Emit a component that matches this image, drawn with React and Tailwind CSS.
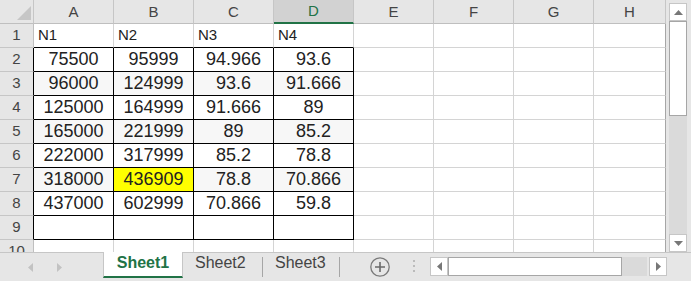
import React from 'react';

const COLS = ['A', 'B', 'C', 'D', 'E', 'F', 'G', 'H'];

const DATA = [
    ['N1', 'N2', 'N3', 'N4'],
    ['75500', '95999', '94.966', '93.6'],
    ['96000', '124999', '93.6', '91.666'],
    ['125000', '164999', '91.666', '89'],
    ['165000', '221999', '89', '85.2'],
    ['222000', '317999', '85.2', '78.8'],
    ['318000', '436909', '78.8', '70.866'],
    ['437000', '602999', '70.866', '59.8'],
    ['', '', '', ''],
    ['', '', '', ''],
];

const font = { fontFamily: '"Liberation Sans", Arial, sans-serif' };

// header cell at top of a column
const ColHeader = ({ label, index }) => {
    if (index === 3) {
        return (
            <div className="flex items-center justify-center border-r border-b-2 border-r-[#c6c6c6] border-b-[#217346] bg-[#d2d2d2] pt-[1px] text-[15px] text-[#217346]">
                {label}
            </div>
        );
    }
    return (
        <div className="flex items-center justify-center border-r border-b border-r-[#c6c6c6] border-b-[#bfbfbf] bg-[#e6e6e6] pt-[1px] text-[15px] text-[#444]">
            {label}
        </div>
    );
};

const RowHeader = ({ row }) => {
    const inTable = row >= 2 && row <= 9;
    return (
        <div
            className={`flex items-center justify-center border-r border-b border-b-[#c6c6c6] bg-[#e6e6e6] text-[15px] text-[#444] ${
                inTable ? 'border-r-black' : 'border-r-[#bfbfbf]'
            }`}
        >
            {row}
        </div>
    );
};

const Cell = ({ row, col, value }) => {
    // col: 0..7 => A..H
    const inTable = col <= 3;
    if (!inTable) {
        return (
            <div
                className={`border-r border-b border-b-[#d4d4d4] bg-white ${
                    col === 7 ? 'border-r-[#a6a6a6]' : 'border-r-[#d4d4d4]'
                }`}
            />
        );
    }
    const blackRight = row >= 2 && row <= 9;
    const blackBottom = row >= 1 && row <= 9;
    let bg = 'bg-white';
    if (row === 7 && col === 1) bg = 'bg-[#ffff00]';
    else if (row === 3 || row === 5 || row === 7) bg = 'bg-[#f7f7f7]';

    const text =
        row === 1
            ? 'justify-start pl-[4px] text-[15px]'
            : 'justify-center text-[18px]';

    return (
        <div
            className={`flex items-center border-r border-b text-[#222] ${bg} ${text} ${
                blackRight ? 'border-r-black' : 'border-r-[#d4d4d4]'
            } ${blackBottom ? 'border-b-black' : 'border-b-[#d4d4d4]'}`}
        >
            {value}
        </div>
    );
};

const Grid = () => (
    <div className="grid h-[252px] w-[666px] shrink-0 grid-cols-[34px_repeat(7,80px)_72px] auto-rows-[24px] overflow-hidden">
        <div className="relative border-r border-b border-r-[#c6c6c6] border-b-[#bfbfbf] bg-[#e6e6e6]">
            <svg className="absolute left-0 top-0" width="33" height="23">
                <polygon points="17,20 31,20 31,6" fill="#c6c6c6" />
            </svg>
        </div>
        {COLS.map((c, i) => (
            <ColHeader key={c} label={c} index={i} />
        ))}
        {DATA.map((r, ri) => (
            <React.Fragment key={ri}>
                <RowHeader row={ri + 1} />
                {COLS.map((c, ci) => (
                    <Cell key={c} row={ri + 1} col={ci} value={r[ci] || ''} />
                ))}
            </React.Fragment>
        ))}
    </div>
);

const VScroll = () => (
    <div className="flex h-[252px] w-[25px] flex-col bg-[#e6e6e6] pl-[3px] pt-[3px]">
        <div className="flex h-[18px] w-[18px] items-center justify-center border border-[#c6c6c6] bg-white">
            <svg width="9" height="5">
                <polygon points="0,5 9,5 4.5,0" fill="#777" />
            </svg>
        </div>
        <div className="h-[95px] w-[18px] border border-[#a6a6a6] bg-white" />
        <div className="w-[18px] flex-1 bg-[#dadada]" />
        <div className="flex h-[18px] w-[18px] items-center justify-center border border-[#c6c6c6] bg-white">
            <svg width="9" height="5">
                <polygon points="0,0 9,0 4.5,5" fill="#777" />
            </svg>
        </div>
    </div>
);

const TabBar = () => (
    <div className="flex h-[29px] items-start border-t border-[#c6c6c6] bg-[#e6e6e6]">
        <div className="flex w-[103px] shrink-0 items-start">
            <svg className="ml-[28px] mt-[10px]" width="5" height="9">
                <polygon points="5,0 5,9 0,4.5" fill="#c2c2c2" />
            </svg>
            <svg className="ml-[24px] mt-[10px]" width="5" height="9">
                <polygon points="0,0 0,9 5,4.5" fill="#c2c2c2" />
            </svg>
        </div>
        <div className="-mt-px flex h-[26px] w-[80px] shrink-0 items-center justify-center border-x border-b-2 border-x-[#c6c6c6] border-b-[#217346] bg-white pb-[3px] text-[16px] font-bold text-[#217346]">
            Sheet1
        </div>
        <span className="ml-[12px] w-[52px] shrink-0 whitespace-nowrap text-[16px] leading-[20px] text-[#444]">Sheet2</span>
        <div className="ml-[15px] mt-[4px] h-[20px] w-px shrink-0 bg-[#a6a6a6]" />
        <span className="ml-[12px] w-[52px] shrink-0 whitespace-nowrap text-[16px] leading-[20px] text-[#444]">Sheet3</span>
        <div className="ml-[12px] mt-[4px] h-[20px] w-px shrink-0 bg-[#a6a6a6]" />
        <svg className="ml-[30px] mt-[4px] shrink-0" width="20" height="20">
            <circle cx="10" cy="10" r="9.2" fill="none" stroke="#7a7a7a" strokeWidth="1.3" />
            <path d="M10 5v10M5 10h10" stroke="#6a6a6a" strokeWidth="1.6" />
        </svg>
        <div className="ml-[23px] mt-[7px] flex shrink-0 flex-col gap-[3px]">
            <div className="h-[2px] w-[2px] bg-[#bbb]" />
            <div className="h-[2px] w-[2px] bg-[#bbb]" />
            <div className="h-[2px] w-[2px] bg-[#bbb]" />
        </div>
        <div className="ml-[15px] mt-[4px] flex shrink-0">
            <div className="flex h-[19px] w-[18px] items-center justify-center border border-[#c6c6c6] bg-white">
                <svg width="5" height="9">
                    <polygon points="5,0 5,9 0,4.5" fill="#777" />
                </svg>
            </div>
            <div className="h-[19px] w-[174px] border border-[#a6a6a6] bg-white" />
            <div className="h-[19px] w-[25px] bg-[#dadada]" />
            <div className="ml-[2px] flex h-[19px] w-[18px] items-center justify-center border border-[#c6c6c6] bg-white">
                <svg width="5" height="9">
                    <polygon points="0,0 0,9 5,4.5" fill="#777" />
                </svg>
            </div>
        </div>
    </div>
);

const App = () => {
    return (
        <div className="flex h-[281px] w-[691px] flex-col overflow-hidden bg-[#e6e6e6]" style={font}>
            <div className="flex h-[252px]">
                <Grid />
                <VScroll />
            </div>
            <TabBar />
        </div>
    );
};

export default App;
